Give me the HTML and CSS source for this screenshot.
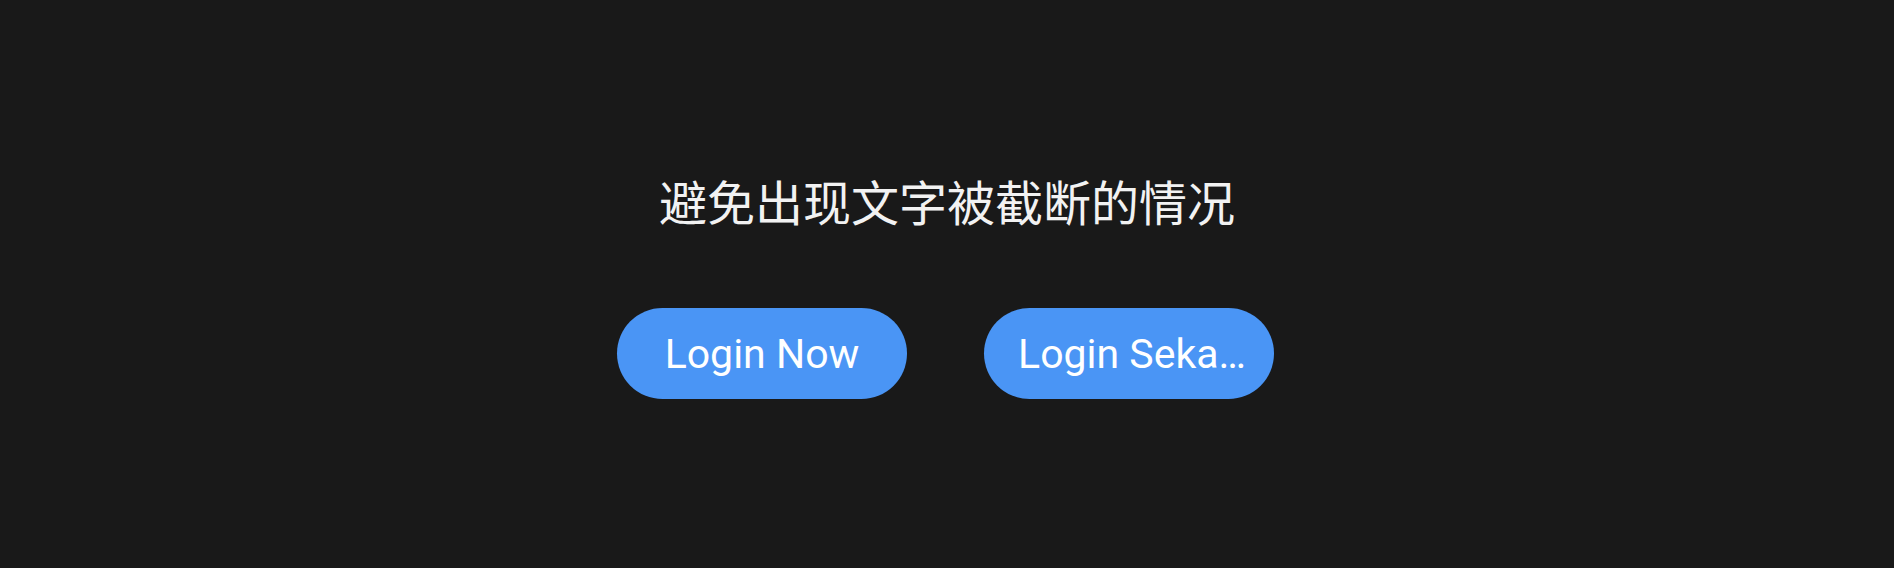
FILE: index.html
```html
<!DOCTYPE html>
<html lang="zh">
<head>
<meta charset="utf-8">
<link rel="stylesheet" href="styles.css">
</head>
<body>
<main class="screen">
  <h1 class="title">避免出现文字被截断的情况</h1>
  <div class="actions">
    <button class="btn">Login Now</button>
    <button class="btn btn-long">Login Seka…</button>
  </div>
</main>
</body>
</html>
```
FILE: styles.css
```css
html, body {
  margin: 0;
  padding: 0;
  background: #191919;
}
.screen {
  height: 568px;
  box-sizing: border-box;
  padding-top: 168px;
  display: flex;
  flex-direction: column;
  align-items: center;
}
.title {
  margin: 0;
  font-family: "Noto Sans CJK SC", sans-serif;
  font-weight: 400;
  font-size: 48px;
  line-height: 64px;
  color: #f2f2f2;
}
.actions {
  margin-top: 76px;
  margin-right: 3px;
  display: flex;
  gap: 77px;
}
.btn {
  width: 290px;
  height: 91px;
  box-sizing: border-box;
  padding: 2px 0 0;
  border: none;
  border-radius: 46px;
  background: #4a95f5;
  color: #ffffff;
  font-family: Roboto, "Noto Sans", sans-serif;
  font-size: 41px;
  line-height: 1;
  white-space: nowrap;
}
.btn-long {
  padding-left: 6px;
}
```
